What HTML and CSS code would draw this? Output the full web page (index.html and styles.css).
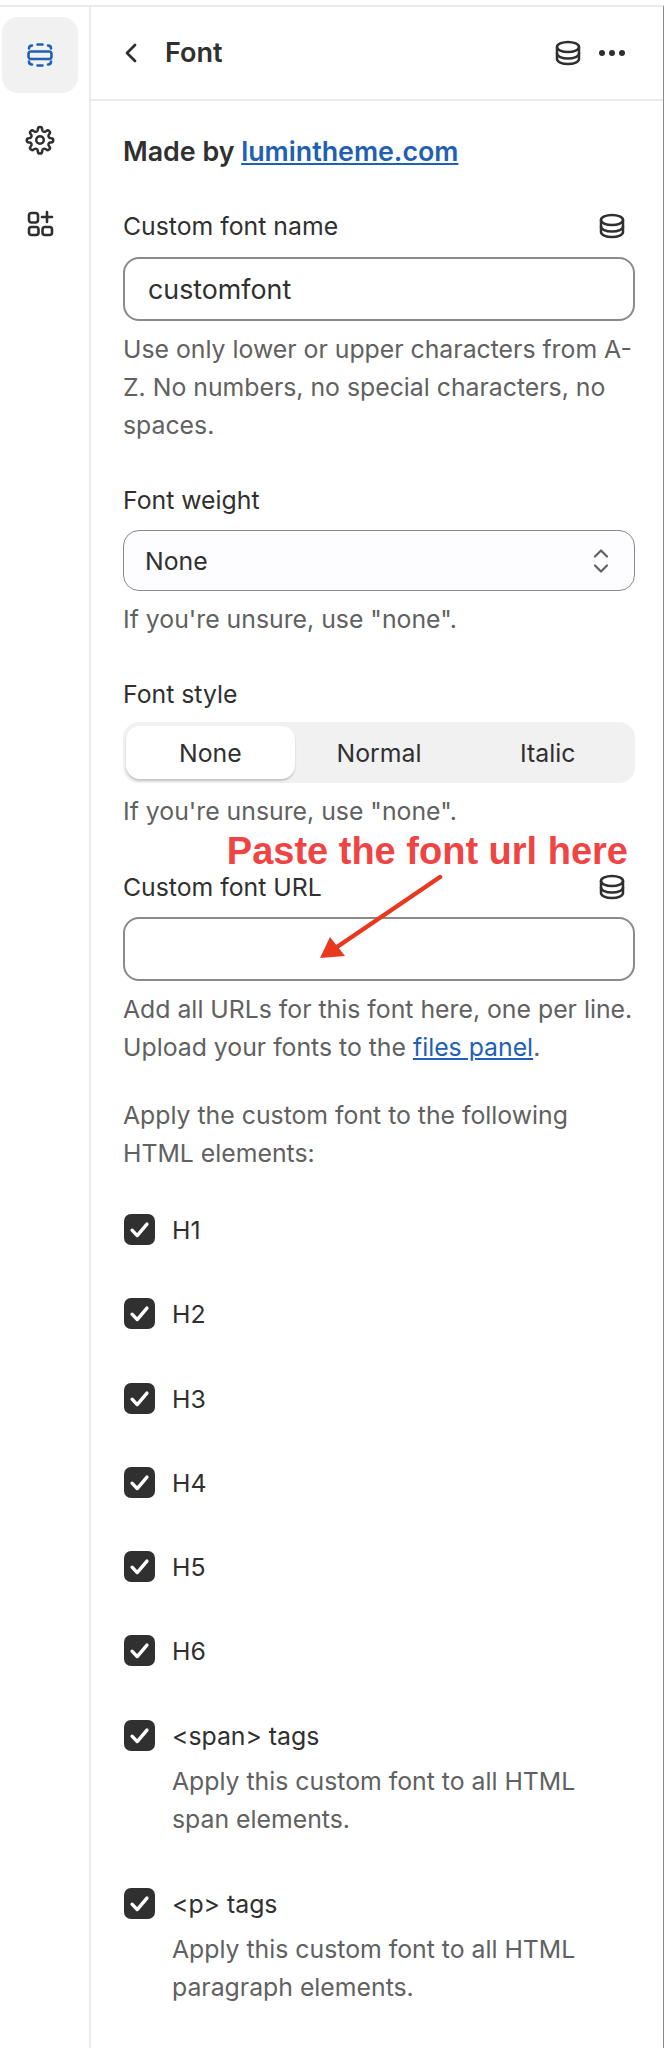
FILE: index.html
```html
<!DOCTYPE html>
<html lang="en">
<head>
  <meta charset="UTF-8">
  <title>Font</title>
  <link rel="stylesheet" href="styles.css">
</head>
<body>
  <div class="app">
    <nav class="rail">
      <div class="rail-item active">
        <svg width="30" height="30" viewBox="0 0 30 30" fill="none" stroke="#1f5fb4" stroke-width="2.6" stroke-linecap="round" stroke-linejoin="round">
          <path d="M4 8.500c0-2 1.200-3 3-3M12.500 4.500h5M23 5.500c1.800 0 3 1 3 3"/>
          <path d="M4 21.500c0 2 1.200 3 3 3M12.500 25.500h5M23 24.500c1.800 0 3-1 3-3"/>
          <rect x="3.500" y="11.500" width="23" height="7.500" rx="2.500"/>
        </svg>
      </div>
      <div class="rail-item">
        <svg width="30" height="30" viewBox="0 0 24 24" fill="none" stroke="#2f2f2f" stroke-width="2" stroke-linecap="round" stroke-linejoin="round">
          <circle cx="12" cy="12" r="3"/>
          <path d="M10.300 3.300a1.700 1.700 0 0 1 3.400 0l.1.800a1.700 1.700 0 0 0 2.600 1.100l.7-.4a1.700 1.700 0 0 1 2.400 2.400l-.5.700a1.700 1.700 0 0 0 1 2.500l.9.100a1.700 1.700 0 0 1 0 3.400l-.9.100a1.700 1.700 0 0 0-1 2.500l.5.700a1.700 1.700 0 0 1-2.400 2.400l-.7-.4a1.700 1.700 0 0 0-2.600 1.100l-.1.800a1.700 1.700 0 0 1-3.400 0l-.1-.8a1.700 1.700 0 0 0-2.600-1.100l-.7.4a1.700 1.700 0 0 1-2.400-2.400l.5-.7a1.700 1.700 0 0 0-1-2.500l-.9-.1a1.700 1.700 0 0 1 0-3.400l.9-.1a1.700 1.700 0 0 0 1-2.500l-.5-.7a1.700 1.700 0 0 1 2.400-2.400l.7.400a1.700 1.700 0 0 0 2.600-1.100z"/>
        </svg>
      </div>
      <div class="rail-item">
        <svg width="30" height="30" viewBox="0 0 30 30" fill="none" stroke="#2f2f2f" stroke-width="2.600" stroke-linecap="round" stroke-linejoin="round">
          <rect x="4" y="4" width="9" height="9.500" rx="2.500"/>
          <rect x="4" y="18" width="9.500" height="8" rx="2.500"/>
          <rect x="17.500" y="18" width="9.500" height="8" rx="2.500"/>
          <path d="M22 3v10M17 8h10"/>
        </svg>
      </div>
    </nav>

    <main class="panel">
      <header class="panel-head">
        <svg class="back" width="14" height="22" viewBox="0 0 14 22" fill="none" stroke="#2f2f2f" stroke-width="2.800" stroke-linecap="round" stroke-linejoin="round"><path d="M11 3 3 11l8 8"/></svg>
        <span class="panel-title">Font</span>
        <svg class="db" width="28" height="28" viewBox="0 0 28 28"><use href="#db-icon"/></svg>
        <span class="dots"><i></i><i></i><i></i></span>
      </header>

      <div class="panel-body">
        <p class="made">Made by <a href="#">lumintheme.com</a></p>

        <div class="field-label name-label">Custom font name
          <svg width="28" height="28" viewBox="0 0 28 28"><use href="#db-icon"/></svg>
        </div>
        <div class="input">customfont</div>
        <p class="help">Use only lower or upper characters from A-Z. No numbers, no special characters, no spaces.</p>

        <div class="field-label weight-label">Font weight</div>
        <div class="select">None
          <svg width="18" height="28" viewBox="0 0 18 28" fill="none" stroke="#616161" stroke-width="2.200" stroke-linecap="round" stroke-linejoin="round"><path d="M3 9.500 9 3.500l6 6M3 18.500l6 6 6-6"/></svg>
        </div>
        <p class="help">If you're unsure, use "none".</p>

        <div class="field-label style-label">Font style</div>
        <div class="segments">
          <span class="segment on">None</span>
          <span class="segment">Normal</span>
          <span class="segment">Italic</span>
        </div>
        <p class="help">If you're unsure, use "none".</p>

        <div class="url-field">
          <div class="field-label url-label">Custom font URL
            <svg width="28" height="28" viewBox="0 0 28 28"><use href="#db-icon"/></svg>
          </div>
          <div class="input empty"></div>
          <div class="callout">Paste the font url here</div>
          <svg class="arrow" width="130" height="95" viewBox="0 0 130 95">
            <path d="M127 9 24 79" stroke="#e8381f" stroke-width="4.500" stroke-linecap="round"/>
            <path d="M7 90 17 69 32 88z" fill="#e8381f"/>
          </svg>
        </div>
        <p class="help">Add all URLs for this font here, one per line.<br>Upload your fonts to the <a href="#">files panel</a>.</p>

        <p class="help apply">Apply the custom font to the following HTML elements:</p>

        <ul class="checks">
          <li class="check"><span class="box"><svg viewBox="0 0 20 20"><use href="#tick"/></svg></span>H1</li>
          <li class="check"><span class="box"><svg viewBox="0 0 20 20"><use href="#tick"/></svg></span>H2</li>
          <li class="check"><span class="box"><svg viewBox="0 0 20 20"><use href="#tick"/></svg></span>H3</li>
          <li class="check"><span class="box"><svg viewBox="0 0 20 20"><use href="#tick"/></svg></span>H4</li>
          <li class="check"><span class="box"><svg viewBox="0 0 20 20"><use href="#tick"/></svg></span>H5</li>
          <li class="check"><span class="box"><svg viewBox="0 0 20 20"><use href="#tick"/></svg></span>H6</li>
          <li class="check tall"><span class="box"><svg viewBox="0 0 20 20"><use href="#tick"/></svg></span>
            <div>&lt;span&gt; tags<p class="help">Apply this custom font to all HTML span elements.</p></div>
          </li>
          <li class="check tall"><span class="box"><svg viewBox="0 0 20 20"><use href="#tick"/></svg></span>
            <div>&lt;p&gt; tags<p class="help">Apply this custom font to all HTML paragraph elements.</p></div>
          </li>
        </ul>
      </div>
    </main>
  </div>

  <svg class="defs" width="0" height="0">
    <defs>
      <g id="db-icon" fill="none" stroke="#2f2f2f" stroke-width="2.500" stroke-linecap="round" stroke-linejoin="round">
        <ellipse cx="14" cy="8" rx="11" ry="5"/>
        <path d="M3 8v12c0 2.800 4.900 5 11 5s11-2.200 11-5V8"/>
        <path d="M3 14.500c0 2.800 4.900 5 11 5s11-2.200 11-5"/>
      </g>
      <path id="tick" d="M4.500 10.500 8.300 14.500 15.500 6" fill="none" stroke="#fff" stroke-width="2.500" stroke-linecap="round" stroke-linejoin="round"/>
    </defs>
  </svg>
</body>
</html>
```

FILE: styles.css
```css
* {
  box-sizing: border-box;
}
body {
  margin: 0;
  background: #fff;
  color: #303030;
  font-family: Inter, "Liberation Sans", sans-serif;
  font-size: 24.800px;
  line-height: 38px;
}
.app {
  display: flex;
  height: 2043px;
  margin-top: 5px;
  overflow: hidden;
  border-top: 2px solid #ebebeb;
  border-right: 1px solid #8a8a8a;
}
.rail {
  flex: none;
  width: 91px;
  border-right: 2px solid #ebebeb;
  padding: 10px 11px 0 2px;
  display: flex;
  flex-direction: column;
  align-items: stretch;
}
.rail-item {
  height: 76px;
  margin-bottom: 8.500px;
  display: flex;
  align-items: center;
  justify-content: center;
}
.rail-item.active {
  background: #f1f1f1;
  border-radius: 16px;
}
.panel {
  flex: 1;
  min-width: 0;
}
.panel-head {
  height: 94px;
  border-bottom: 2px solid #ebebeb;
  display: flex;
  align-items: center;
  padding: 0 38px 0 33px;
}
.back {
  margin-right: 27px;
}
.panel-title {
  font-size: 27px;
  font-weight: 600;
  flex: 1;
}
.db {
  margin-right: 17px;
}
.dots {
  display: flex;
  gap: 4px;
}
.dots i {
  width: 6px;
  height: 6px;
  border-radius: 50%;
  background: #303030;
}
.panel-body {
  padding: 0 28px 0 32px;
}
.panel-body a {
  color: #1f5fb4;
  text-decoration: underline;
}
.made {
  margin: 31px 0 0;
  font-size: 26.800px;
  font-weight: 600;
}
.field-label {
  display: flex;
  justify-content: space-between;
  align-items: center;
  height: 38px;
  padding-right: 9px;
}
.name-label {
  margin-top: 37px;
  margin-bottom: 12px;
}
.input {
  height: 64px;
  border: 2px solid #8a8a8a;
  border-radius: 16px;
  padding: 0 23px;
  display: flex;
  align-items: center;
  font-size: 26.800px;
}
.help {
  margin: 9px -4px 0 0;
  color: #616161;
}
.weight-label {
  margin-top: 37px;
  margin-bottom: 11px;
}
.select {
  height: 61px;
  border: 1.500px solid #8a8a8a;
  border-radius: 16px;
  background: #fdfdff;
  padding: 0 24px 0 21px;
  display: flex;
  align-items: center;
  justify-content: space-between;
}
.style-label {
  margin-top: 37px;
  margin-bottom: 9px;
}
.segments {
  height: 61px;
  background: #f1f1f1;
  border-radius: 16px;
  padding: 4px 3px;
  display: grid;
  grid-template-columns: repeat(3, 1fr);
}
.segment {
  display: flex;
  align-items: center;
  justify-content: center;
  border-radius: 14px;
}
.segment.on {
  background: #fff;
  box-shadow: 0 2px 2px rgba(0, 0, 0, .18);
}
.url-field {
  position: relative;
  margin-top: 38px;
}
.url-label {
  margin-bottom: 11px;
}
.callout {
  position: absolute;
  top: -34px;
  right: 7px;
  height: 34px;
  color: #ef4444;
  font-family: "Liberation Sans", sans-serif;
  font-size: 38px;
  line-height: 34px;
  font-weight: 700;
  white-space: nowrap;
}
.arrow {
  position: absolute;
  top: 0;
  left: 190px;
}
.apply {
  margin-top: 30px;
}
.checks {
  list-style: none;
  margin: 17px 0 0;
  padding: 0;
}
.check {
  display: flex;
  align-items: flex-start;
  gap: 17px;
  height: 84.300px;
  padding-top: 22px;
}
.check.tall {
  height: 168px;
}
.box {
  flex: none;
  width: 31px;
  height: 31px;
  margin-top: 3px;
  margin-left: 1px;
  border-radius: 7px;
  background: #303030;
  display: flex;
  align-items: center;
  justify-content: center;
}
.box svg {
  width: 27px;
  height: 27px;
}
.check .help {
  margin-top: 7px;
}
.defs {
  position: absolute;
}
```
